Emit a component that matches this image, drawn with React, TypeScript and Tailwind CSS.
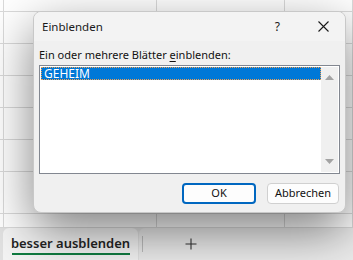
import React from "react";

const font = { fontFamily: '"Noto Sans", "Open Sans", sans-serif' };

const rows = [12, 32, 32, 32, 32, 32, 42, 14];
const cols = ["w-[4px]", "w-[153px]", "w-[128px]", "flex-1"];

function Sheet() {
  return (
    <div className="flex h-[228px] flex-col bg-white">
      {rows.map((h, i) => (
        <div key={i} className="flex border-b border-[#dadada]" style={{ height: h }}>
          {cols.map((c, j) => (
            <div key={j} className={`${c} shrink-0 border-r border-[#dadada]`} />
          ))}
        </div>
      ))}
    </div>
  );
}

function TabBar() {
  return (
    <div className="flex h-[32px] items-stretch bg-[#e2e2e2] pl-[3px]">
      <div className="flex w-[135px] flex-col items-center justify-center rounded-t-[6px] bg-[#f4f4f4]">
        <span className="mt-[2px] text-[13px] font-semibold leading-[16px] text-[#242424]">
          besser ausblenden
        </span>
        <div className="mt-[2px] h-[2px] w-[118px] bg-[#107c41]" />
      </div>
      <div className="ml-[1px] flex flex-1 items-center rounded-tl-[6px] bg-[#ececec]">
        <div className="ml-[3px] h-[16px] w-px bg-[#bdbdbd]" />
        <div className="ml-[42px] text-[#333]">
          <svg width="12" height="12" viewBox="0 0 12 12">
            <path d="M6 0.5v11M0.5 6h11" stroke="currentColor" strokeWidth="1.1" fill="none" />
          </svg>
        </div>
      </div>
    </div>
  );
}

function Dialog() {
  return (
    <div className="absolute left-[33px] top-[11px] flex h-[202px] w-[313px] flex-col overflow-hidden rounded-[8px] border border-[#c8c8c8] bg-[#f0f0f0] shadow-[0_18px_50px_rgba(0,0,0,0.5)]">
      <div className="flex h-[29px] shrink-0 items-center bg-[#f3f3f3] pl-[8px] pr-[16px] text-[11.5px] text-[#1a1a1a]">
        <span>Einblenden</span>
        <span className="ml-auto mr-[38px] text-[12px]">?</span>
        <svg width="11" height="11" viewBox="0 0 11 11">
          <path d="M0.5 0.5l10 10M10.5 0.5l-10 10" stroke="#1a1a1a" strokeWidth="1.1" fill="none" />
        </svg>
      </div>
      <div className="flex flex-1 flex-col px-[5px] pt-[6px]">
        <div className="text-[11px] leading-[15px] text-[#111]">
          Ein oder mehrere Blätter <span className="underline underline-offset-2">e</span>inblenden:
        </div>
        <div className="mt-[3px] flex h-[109px] border border-[#828790] bg-white p-px">
          <div className="flex-1">
            <div className="flex h-[13px] items-center border border-dotted border-[#f0a050] bg-[#0078d7] pl-[2px] text-[12px] leading-[12px] text-white">
              GEHEIM
            </div>
          </div>
          <div className="flex w-[17px] flex-col items-center justify-between bg-[#f0f0f0] py-[8px]">
            <svg width="9" height="5" viewBox="0 0 9 5">
              <path d="M4.5 0L9 5H0z" fill="#a3a3a3" />
            </svg>
            <svg width="9" height="5" viewBox="0 0 9 5">
              <path d="M0 0h9L4.5 5z" fill="#a3a3a3" />
            </svg>
          </div>
        </div>
        <div className="mt-auto mb-[8px] flex justify-end gap-[11px] pr-[1px] text-[11px] text-[#111]">
          <button className="h-[21px] w-[74px] rounded-[4px] border-2 border-[#0067c0] bg-[#fdfdfd]">
            OK
          </button>
          <button className="h-[21px] w-[72px] rounded-[4px] border border-[#d0d0d0] bg-[#fdfdfd]">
            Abbrechen
          </button>
        </div>
      </div>
    </div>
  );
}

export default function App() {
  return (
    <div className="relative h-[260px] w-[353px] overflow-hidden bg-white" style={font}>
      <Sheet />
      <TabBar />
      <Dialog />
    </div>
  );
}
